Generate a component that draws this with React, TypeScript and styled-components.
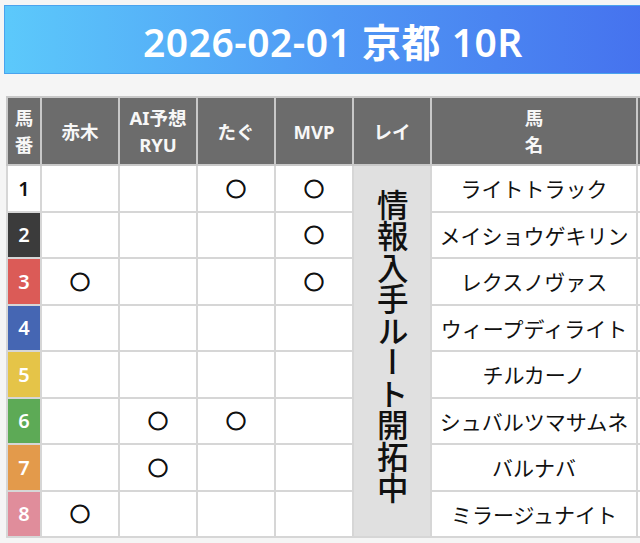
import React from 'react';
import styled, { createGlobalStyle } from 'styled-components';

const GlobalStyle = createGlobalStyle`
  html, body {
    margin: 0;
    padding: 0;
    overflow: hidden;
    background-color: #f5f5f5;
    font-family: "Noto Sans", "Noto Sans CJK JP", sans-serif;
  }
`;

const Page = styled.div`
  width: 670px;
  padding: 5px 0 0 4px;
`;

const TitleBar = styled.div`
  display: flex;
  justify-content: center;
  align-items: center;
  width: 658px;
  height: 69px;
  box-sizing: border-box;
  border: 1px solid #4aa3ee;
  background: linear-gradient(90deg, #5cc9fb 0%, #4f98f4 50%, #4570ee 100%);
  color: #ffffff;
  font-size: 39px;
  font-weight: 600;
  letter-spacing: 0.5px;
`;

const RaceTable = styled.table`
  margin: 22px 0 0 2px;
  border-collapse: collapse;
  table-layout: fixed;
  width: 700px;

  & td, & th {
    border: 2px solid #d6d6d6;
    padding: 0;
    text-align: center;
  }
`;

const HeadCell = styled.th`
  height: 66px;
  background-color: #6c6c6c;
  color: #f7f7f7;
  font-family: "Noto Sans", "Noto Sans CJK JP", sans-serif;
  font-size: 18.5px;
  font-weight: 700;
  line-height: 27px;
  && {
    border-color: #c8c8c8;
  }
`;

const NumCell = styled.td<{ bg: string; fg: string }>`
  height: 44.5px;
  background-color: ${p => p.bg};
  color: ${p => p.fg};
  font-size: 20px;
  font-weight: 600;
`;

const MarkCell = styled.td`
  background-color: #ffffff;
  color: #111111;
  font-family: "Noto Sans CJK JP", sans-serif;
  font-size: 20px;
  font-weight: 700;
  -webkit-text-stroke: 1.1px #111111;
`;

const NoteCell = styled.td`
  background-color: #e0e0e0;
  vertical-align: middle;
`;

const NoteText = styled.div`
  display: inline-block;
  writing-mode: vertical-rl;
  text-orientation: upright;
  font-family: "Noto Sans CJK JP", sans-serif;
  font-size: 31.5px;
  font-weight: 500;
  line-height: 1;
  color: #111111;
  margin-top: -4px;
`;

const NameCell = styled.td`
  background-color: #ffffff;
  color: #111111;
  font-family: "Noto Sans CJK JP", sans-serif;
  font-size: 21px;
  font-weight: 400;
  white-space: nowrap;
`;

const EmptyCell = styled.td`
  background-color: #ffffff;
`;

type Horse = {
  no: number;
  bg: string;
  fg: string;
  akagi: boolean;
  ai: boolean;
  tagu: boolean;
  mvp: boolean;
  name: string;
};

const horses: Horse[] = [
  { no: 1, bg: '#ffffff', fg: '#111111', akagi: false, ai: false, tagu: true, mvp: true, name: 'ライトトラック' },
  { no: 2, bg: '#3b3b3b', fg: '#ffffff', akagi: false, ai: false, tagu: false, mvp: true, name: 'メイショウゲキリン' },
  { no: 3, bg: '#db5b57', fg: '#ffffff', akagi: true, ai: false, tagu: false, mvp: true, name: 'レクスノヴァス' },
  { no: 4, bg: '#4566b3', fg: '#ffffff', akagi: false, ai: false, tagu: false, mvp: false, name: 'ウィープディライト' },
  { no: 5, bg: '#e5c448', fg: '#ffffff', akagi: false, ai: false, tagu: false, mvp: false, name: 'チルカーノ' },
  { no: 6, bg: '#5daa56', fg: '#ffffff', akagi: false, ai: true, tagu: true, mvp: false, name: 'シュバルツマサムネ' },
  { no: 7, bg: '#e39a4b', fg: '#ffffff', akagi: false, ai: true, tagu: false, mvp: false, name: 'バルナバ' },
  { no: 8, bg: '#e08d9b', fg: '#ffffff', akagi: true, ai: false, tagu: false, mvp: false, name: 'ミラージュナイト' },
];

const Mark = ({ on }: { on: boolean }) => <MarkCell>{on ? '○' : ''}</MarkCell>;

const App = () => {
  return (
    <Page>
      <GlobalStyle />
      <TitleBar>2026-02-01 京都 10R</TitleBar>
      <RaceTable>
        <colgroup>
          <col style={{ width: 34 }} />
          <col style={{ width: 78 }} />
          <col style={{ width: 78 }} />
          <col style={{ width: 78 }} />
          <col style={{ width: 78 }} />
          <col style={{ width: 78 }} />
          <col style={{ width: 206 }} />
          <col style={{ width: 70 }} />
        </colgroup>
        <thead>
          <tr>
            <HeadCell>馬番</HeadCell>
            <HeadCell>赤木</HeadCell>
            <HeadCell>AI予想<br />RYU</HeadCell>
            <HeadCell>たぐ</HeadCell>
            <HeadCell>MVP</HeadCell>
            <HeadCell>レイ</HeadCell>
            <HeadCell>馬<br />名</HeadCell>
            <HeadCell />
          </tr>
        </thead>
        <tbody>
          {horses.map((h, i) => (
            <tr key={h.no}>
              <NumCell bg={h.bg} fg={h.fg}>{h.no}</NumCell>
              <Mark on={h.akagi} />
              <Mark on={h.ai} />
              <Mark on={h.tagu} />
              <Mark on={h.mvp} />
              {i === 0 && (
                <NoteCell rowSpan={8}>
                  <NoteText>情報入手ルート開拓中</NoteText>
                </NoteCell>
              )}
              <NameCell>{h.name}</NameCell>
              <EmptyCell />
            </tr>
          ))}
        </tbody>
      </RaceTable>
    </Page>
  );
};

export default App;
